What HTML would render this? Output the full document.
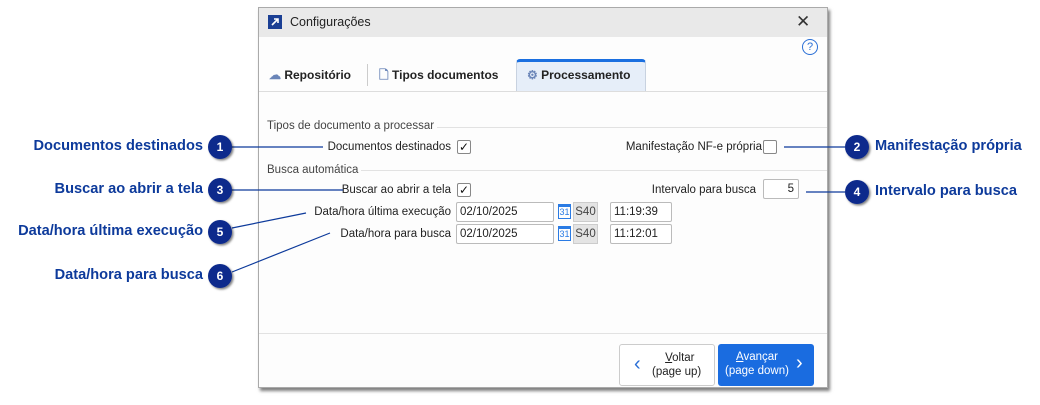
<!DOCTYPE html>
<html><head><meta charset="utf-8"><style>
*{margin:0;padding:0;box-sizing:border-box}
body{width:1040px;height:405px;background:#fff;position:relative;overflow:hidden;font-family:"Liberation Sans",sans-serif;font-size:11.5px;color:#222}
.a{position:absolute}
.dlg{left:258px;top:7px;width:570px;height:381px;background:#fdfdfd;border:1px solid #aaa;box-shadow:2px 3px 3px rgba(0,0,0,.5)}
.tb{left:0;top:0;width:568px;height:29px;background:#e9e9e9}
.lbl{font-size:11.5px;color:#222;white-space:nowrap}
.cb{width:14px;height:14px;border:1px solid #888;border-radius:2px;background:#fff;font-size:12px;line-height:12px;text-align:center;color:#111}
.in{height:20px;border:1px solid #bbb;background:#fff;font-size:11.5px;line-height:18px;padding-left:3px;border-radius:2px}
.call{font-weight:bold;font-size:14.6px;color:#0d3a9b;white-space:nowrap}
</style></head><body>
<div class="a dlg">
 <div class="a tb">
  <div class="a" style="left:9px;top:7px;width:14px;height:14px;background:#1b3f94"><svg width="14" height="14"><path d="M4 10L10 4M6 4H10V8" stroke="#fff" stroke-width="1.6" fill="none"/></svg></div>
  <div class="a lbl" style="left:31px;top:7px;font-size:12.5px">Configurações</div>
  <div class="a" style="left:537px;top:4px;font-size:17px;color:#333">✕</div>
 </div>
 <div class="a" style="left:543px;top:31px;width:16px;height:16px;border:1.3px solid #2a6fd6;border-radius:50%;color:#2a6fd6;font-size:11px;text-align:center;line-height:14px">?</div>
 <div class="a" style="left:10px;top:60px;font-weight:bold;font-size:12px;color:#222;line-height:14px"><span style="color:#6a85b8">☁</span> Repositório</div>
 <div class="a" style="left:108px;top:56px;width:1px;height:22px;background:#ccc"></div>
 <div class="a" style="left:120px;top:60px;font-weight:bold;font-size:12px;color:#222;line-height:14px"><span style="color:#6a85b8;font-size:12px">🗋</span> Tipos documentos</div>
 <div class="a" style="left:257px;top:51px;width:130px;height:33px;background:#e6eef9;border:1px solid #c8d2e0;border-top:3px solid #1a6fe0;border-radius:4px 4px 0 0"></div>
 <div class="a" style="left:268px;top:60px;font-weight:bold;font-size:12px;color:#222;line-height:14px"><span style="color:#6a85b8">⚙</span> Processamento</div>
 <div class="a" style="left:0;top:83px;width:568px;height:1px;background:#ddd"></div>
 <div class="a lbl" style="left:8px;top:112px;color:#444;background:#fdfdfd;z-index:1;padding-right:3px">Tipos de documento a processar</div>
 <div class="a" style="left:160px;top:119px;width:408px;height:1px;background:#e2e2e2"></div>
 <div class="a lbl" style="right:376px;top:133px">Documentos destinados</div>
 <div class="a cb" style="left:198px;top:132px">✓</div>
 <div class="a lbl" style="right:65px;top:133px">Manifestação NF-e própria</div>
 <div class="a cb" style="left:504px;top:132px"></div>
 <div class="a lbl" style="left:8px;top:156px;color:#444;background:#fdfdfd;z-index:1;padding-right:3px">Busca automática</div>
 <div class="a" style="left:94px;top:162px;width:474px;height:1px;background:#e2e2e2"></div>
 <div class="a lbl" style="right:376px;top:176px">Buscar ao abrir a tela</div>
 <div class="a cb" style="left:198px;top:175px">✓</div>
 <div class="a lbl" style="right:71px;top:176px">Intervalo para busca</div>
 <div class="a in" style="left:504px;top:171px;width:36px;text-align:right;padding-right:4px">5</div>
 <div class="a lbl" style="right:376px;top:198px">Data/hora última execução</div>
 <div class="a in" style="left:197px;top:194px;width:98px">02/10/2025</div>
 <div class="a" style="left:299px;top:196px;width:13px;height:15px;border:1.3px solid #2a7be4;border-top-width:3px;color:#2a7be4;font-size:9px;text-align:center;line-height:11px">31</div>
 <div class="a" style="left:314px;top:194px;width:25px;height:20px;background:#e4e4e4;border:1px solid #ccc;color:#444;font-size:11.5px;text-align:center;line-height:18px">S40</div>
 <div class="a in" style="left:351px;top:194px;width:62px">11:19:39</div>
 <div class="a lbl" style="right:376px;top:220px">Data/hora para busca</div>
 <div class="a in" style="left:197px;top:216px;width:98px">02/10/2025</div>
 <div class="a" style="left:299px;top:218px;width:13px;height:15px;border:1.3px solid #2a7be4;border-top-width:3px;color:#2a7be4;font-size:9px;text-align:center;line-height:11px">31</div>
 <div class="a" style="left:314px;top:216px;width:25px;height:20px;background:#e4e4e4;border:1px solid #ccc;color:#444;font-size:11.5px;text-align:center;line-height:18px">S40</div>
 <div class="a in" style="left:351px;top:216px;width:62px">11:12:01</div>
 <div class="a" style="left:0;top:325px;width:568px;height:1px;background:#e2e2e2"></div>
 <div class="a" style="left:360px;top:336px;width:96px;height:42px;background:#fff;border:1px solid #ccc;border-radius:3px">
  <div class="a" style="left:14px;top:8px;font-size:20px;color:#2a6fd6">‹</div>
  <div class="a" style="left:32px;top:6px;text-align:center;line-height:14px;font-size:11.5px">&nbsp;&nbsp;<u>V</u>oltar<br>(page up)</div>
 </div>
 <div class="a" style="left:459px;top:336px;width:96px;height:42px;background:#1a6ce0;border-radius:3px;color:#fff">
  <div class="a" style="left:7px;top:6px;text-align:center;line-height:14px;font-size:11.5px"><u>A</u>vançar<br>(page down)</div>
  <div class="a" style="left:78px;top:8px;font-size:20px">›</div>
 </div>
</div>
<svg class="a" style="left:0;top:0" width="1040" height="405">
 <defs><filter id="s"><feDropShadow dx="1.5" dy="1.5" stdDeviation="1" flood-opacity=".5"/></filter></defs>
 <g stroke="#0d3a9b" stroke-width="1.2">
  <line x1="232" y1="147" x2="323" y2="147"/><line x1="232" y1="190" x2="343" y2="190"/>
  <line x1="232" y1="228" x2="306" y2="213"/><line x1="232" y1="272" x2="330" y2="233"/>
  <line x1="784" y1="147" x2="845" y2="147"/><line x1="806" y1="192" x2="845" y2="192"/>
 </g>
 <g fill="#0a2a8c" filter="url(#s)">
  <circle cx="220" cy="147" r="12"/><circle cx="220" cy="190" r="12"/><circle cx="220" cy="232" r="12"/><circle cx="220" cy="276" r="12"/>
  <circle cx="857" cy="147" r="12"/><circle cx="857" cy="192" r="12"/>
 </g>
 <g fill="#fff" font-family="Liberation Sans" font-weight="bold" font-size="12" text-anchor="middle">
  <text x="220" y="151">1</text><text x="220" y="194">3</text><text x="220" y="236">5</text><text x="220" y="280">6</text>
  <text x="857" y="151">2</text><text x="857" y="196">4</text>
 </g>
</svg>
<div class="a call" style="right:837px;top:138px">Documentos destinados</div>
<div class="a call" style="right:837px;top:181px">Buscar ao abrir a tela</div>
<div class="a call" style="right:837px;top:223px">Data/hora última execução</div>
<div class="a call" style="right:837px;top:267px">Data/hora para busca</div>
<div class="a call" style="left:875px;top:138px">Manifestação própria</div>
<div class="a call" style="left:875px;top:183px">Intervalo para busca</div>
</body></html>
